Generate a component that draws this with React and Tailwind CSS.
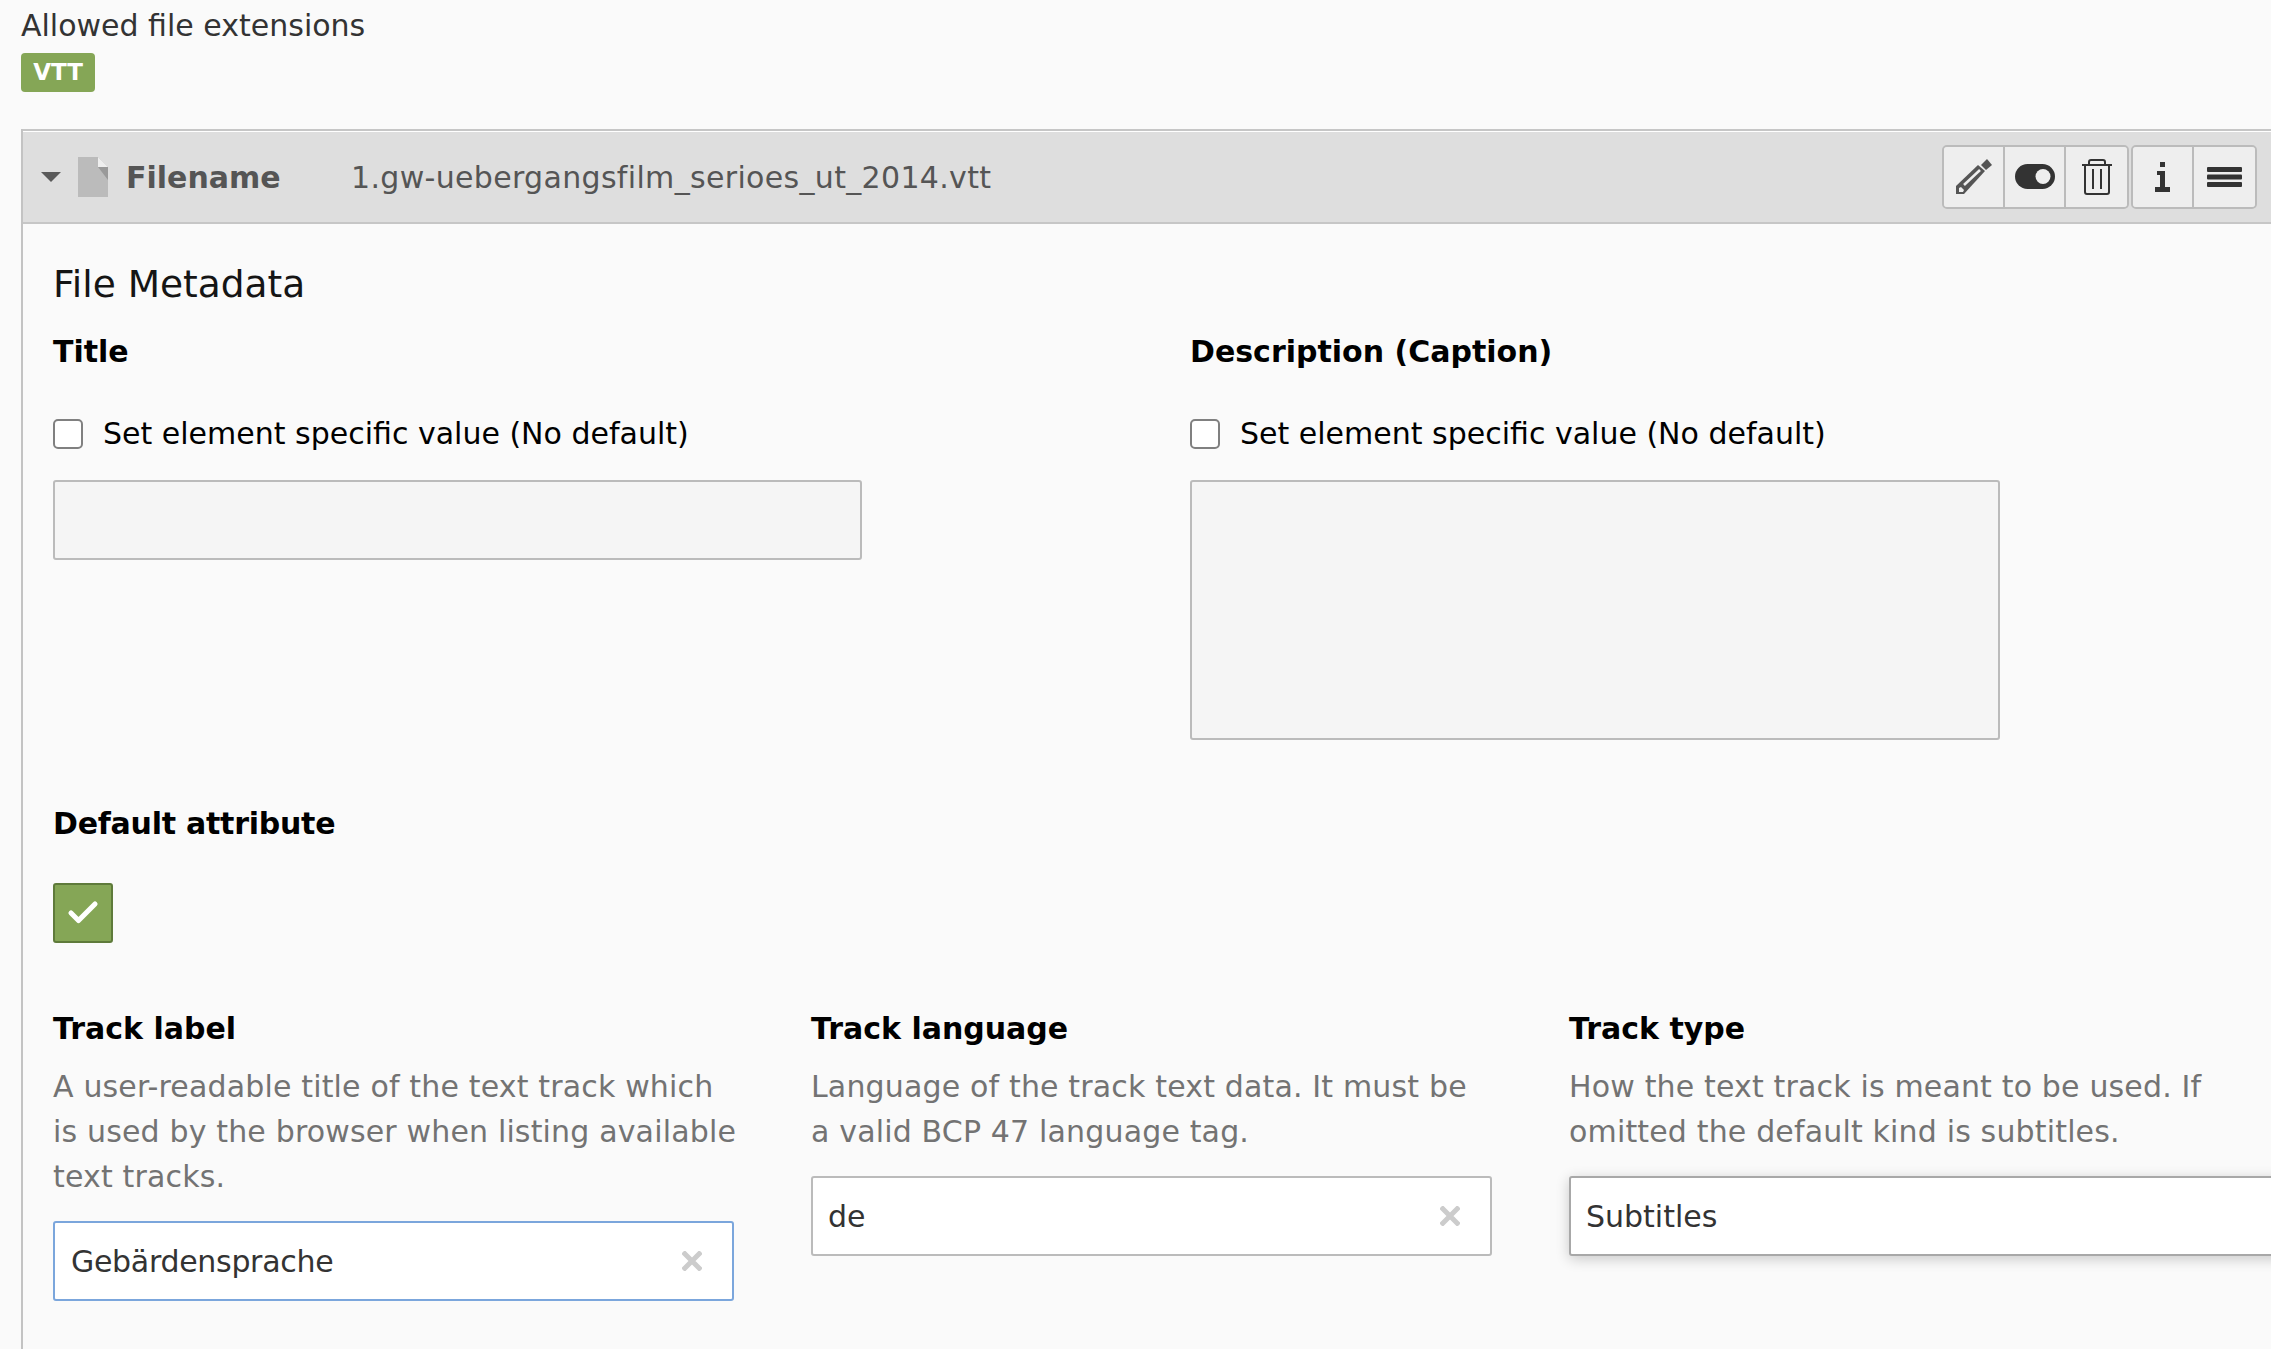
import { Check } from 'lucide-react';

function FileIcon() {
  return (
    <svg width="30" height="40" viewBox="0 0 30 40" className="mr-[18px] shrink-0">
      <path d="M0 0h20l10 10v30H0z" fill="#bbbbbb" />
      <path d="M20 0l10 10H20z" fill="#eeeeee" />
      <path d="M20 10h10v13z" fill="#999999" />
    </svg>
  );
}

function PencilIcon() {
  return (
    <svg width="36" height="36" viewBox="0 0 36 36">
      <path d="M25 6l6-6 5 6-6 5z" fill="#555" />
      <path d="M0 27L22 6l7 6-21 23H0z" fill="#555" />
      <path d="M8 26L24 11" stroke="#eee" strokeWidth="2.5" />
      <path d="M3 29l2-1 3 3-1 2H3z" fill="#eee" />
    </svg>
  );
}

function ToggleIcon() {
  return (
    <svg width="40" height="25" viewBox="0 0 40 25">
      <rect width="40" height="25" rx="12.5" fill="#333" />
      <circle cx="28" cy="12.5" r="7.5" fill="#eee" />
    </svg>
  );
}

function TrashIcon() {
  return (
    <svg width="30" height="36" viewBox="0 0 30 36" fill="none" stroke="#333" strokeWidth="2">
      <path d="M0 6h30" />
      <path d="M7 6V3a2 2 0 0 1 2-2h12a2 2 0 0 1 2 2v3" />
      <path d="M3 6v27a2 2 0 0 0 2 2h20a2 2 0 0 0 2-2V6" />
      <path d="M11 10v20M19 10v20" />
    </svg>
  );
}

function InfoIcon() {
  return (
    <svg width="15" height="30" viewBox="0 0 15 30" fill="#333">
      <rect x="5" y="0" width="5" height="5" />
      <path d="M2 9h8v16h5v5H0v-5h5V13H2z" />
    </svg>
  );
}

function MenuIcon() {
  return (
    <svg width="35" height="20" viewBox="0 0 35 20" fill="#333">
      <rect width="35" height="5" rx="1" />
      <rect y="7.500" width="35" height="5" rx="1" />
      <rect y="15" width="35" height="5" rx="1" />
    </svg>
  );
}

function ClearIcon() {
  return (
    <svg width="20" height="20" viewBox="0 0 20 20" stroke="#cccccc" strokeWidth="5" className="shrink-0">
      <path d="M1 1l18 18M19 1L1 19" />
    </svg>
  );
}

function HeaderButton({ children, last }) {
  return (
    <button className={`flex h-full w-[61px] items-center justify-center bg-[#eeeeee] ${last ? '' : 'border-r-2 border-[#bbbbbb]'}`}>
      {children}
    </button>
  );
}

function SpecificValue() {
  return (
    <label className="mt-[37px] flex h-[45px] items-center text-black">
      <input type="checkbox" className="h-[30px] w-[30px] appearance-none rounded-[5px] border-2 border-[#808080] bg-white" />
      <span className="ml-[20px]">Set element specific value (No default)</span>
    </label>
  );
}

function TrackField({ label, help, helpClass = 'w-[680px]', value, focused, raised, clear = true, wide, valueClass = '' }) {
  return (
    <div className={wide ? 'w-[820px] shrink-0' : 'w-[681px] shrink-0'}>
      <div className="h-[45px] font-bold leading-[45px] text-black">{label}</div>
      <div className={`mt-[13px] leading-[45px] tracking-[0.16px] text-[#737373] ${helpClass}`}>{help}</div>
      <div
        className={`mt-[22px] flex h-[80px] items-center rounded-[3px] border-2 bg-white pl-[15px] pr-[30px] text-[#333333] ${
          focused ? 'border-[#7ba6dc]' : raised ? 'border-[#a8a8a8] shadow-[0_3px_14px_rgba(0,0,0,0.2)]' : 'border-[#bbbbbb]'
        }`}
      >
        <span className={`flex-1 ${valueClass}`}>{value}</span>
        {clear && <ClearIcon />}
      </div>
    </div>
  );
}

export default function App() {
  return (
    <div className="h-[1349px] w-[2271px] overflow-hidden bg-[#fafafa] font-['DejaVu_Sans',sans-serif] text-[30px] leading-[45px]">
      <div className="pl-[21px] pt-[3px]">
        <div className="text-[#333333]">Allowed file extensions</div>
        <div className="mt-[5px] flex h-[39px] w-[74px] items-center justify-center rounded-[4px] bg-[#85a656] text-[23px] font-bold text-white">VTT</div>
      </div>

      <div className="ml-[21px] mt-[37px] border-l-2 border-[#c3c3c3] pb-[120px]">
        <div className="flex h-[95px] items-center border-y-2 border-[#c6c6c6] bg-[#dedede] pl-[18px] pr-[14px] shadow-[inset_0_1px_0_#ffffff]">
          <svg width="20" height="10" viewBox="0 0 20 10" className="mr-[17px] shrink-0">
            <path d="M0 0h20L10 10z" fill="#5a5a5a" />
          </svg>
          <FileIcon />
          <span className="mt-[2px] w-[225px] font-bold text-[#555555]">Filename</span>
          <span className="mt-[2px] flex-1 tracking-[0.33px] text-[#555555]">1.gw-uebergangsfilm_serioes_ut_2014.vtt</span>
          <div className="flex h-[64px] overflow-hidden rounded-[5px] border-2 border-[#bbbbbb]">
            <HeaderButton><PencilIcon /></HeaderButton>
            <HeaderButton><ToggleIcon /></HeaderButton>
            <HeaderButton last><TrashIcon /></HeaderButton>
          </div>
          <div className="ml-[2px] flex h-[64px] overflow-hidden rounded-[5px] border-2 border-[#bbbbbb]">
            <HeaderButton><InfoIcon /></HeaderButton>
            <HeaderButton last><MenuIcon /></HeaderButton>
          </div>
        </div>

        <div className="pl-[30px] pt-[38px]">
          <h2 className="text-[37.5px] leading-[45px] text-[#151515]">File Metadata</h2>

          <div className="mt-[22px] flex">
            <div className="w-[1137px] shrink-0">
              <div className="font-bold text-black">Title</div>
              <SpecificValue />
              <input readOnly className="mt-[24px] block h-[80px] w-[809px] rounded-[3px] border-2 border-[#bbbbbb] bg-[#f5f5f5]" />
            </div>
            <div>
              <div className="font-bold text-black">Description (Caption)</div>
              <SpecificValue />
              <textarea readOnly className="mt-[24px] block h-[260px] w-[810px] resize-none rounded-[3px] border-2 border-[#bbbbbb] bg-[#f5f5f5]" />
            </div>
          </div>

          <div className="mt-[61px] font-bold tracking-[-0.25px] text-black">Default attribute</div>
          <div className="mt-[37px] flex h-[60px] w-[60px] items-center justify-center rounded-[3px] border-2 border-[#5e7a3a] bg-[#85a656]">
            <Check size={36} strokeWidth={3.4} className="text-white" />
          </div>

          <div className="mt-[63px] flex gap-[77px]">
            <TrackField
              label="Track label"
              help="A user-readable title of the text track which is used by the browser when listing available text tracks."
              helpClass="w-[686px]"
              value="Gebärdensprache"
              valueClass="ml-[1px] tracking-[-0.3px]"
              focused
            />
            <TrackField
              label="Track language"
              help="Language of the track text data. It must be a valid BCP 47 language tag."
              value="de"
            />
            <TrackField
              label="Track type"
              help="How the text track is meant to be used. If omitted the default kind is subtitles."
              value="Subtitles"
              raised
              clear={false}
              wide
            />
          </div>
        </div>
      </div>
    </div>
  );
}
